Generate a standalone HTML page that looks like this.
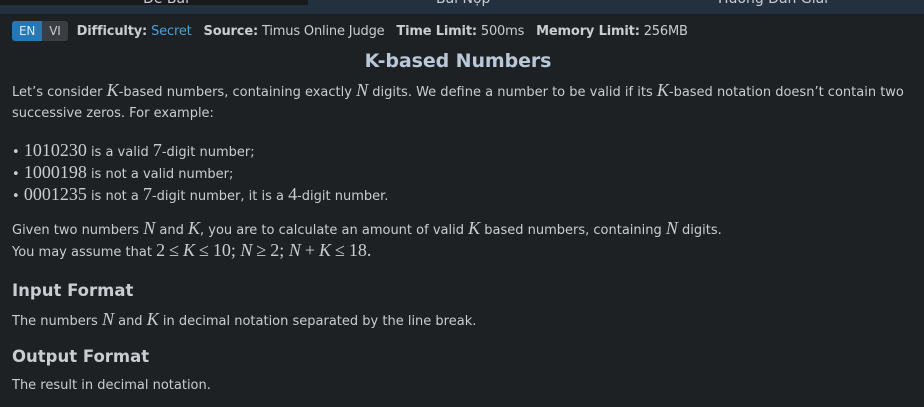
<!DOCTYPE html>
<html><head><meta charset="utf-8"><style>
body{margin:0;background:#1e2124;color:#c9cdd1;font-family:"DejaVu Sans","Liberation Sans",sans-serif;font-size:13px;width:924px;height:407px;overflow:hidden;position:relative}
.tabs{position:absolute;top:0;left:0;width:924px;height:14px;background:#22303f;overflow:hidden}
.tabs div{position:absolute;top:-9px;font-size:14px;color:#c9cdd1}
.t1{left:0;width:308px;height:14px;background:#17191b;position:absolute}
.meta{position:absolute;top:21px;left:12px;display:flex;align-items:center;font-size:13px;letter-spacing:-0.17px}
.lang{display:flex;border-radius:3px;overflow:hidden;margin-right:9px}
.lang span{display:inline-block;height:20px;line-height:20px;padding:0 7px;font-size:12px}
.en{background:#2478b5;color:#dfe8f0}.vi{background:#3a3e43;color:#c9cdd1}
b{font-weight:bold;color:#c9cdd1}
.blue{color:#4a9fd8}
h1{position:absolute;top:50px;left:0;width:916px;text-align:center;margin:0;font-size:19px;color:#b9c8d8;font-weight:bold;letter-spacing:-0.1px}
.p{position:absolute;left:12px;line-height:21px;letter-spacing:0}
i.m{font-family:"Liberation Serif",serif;font-size:18px;font-style:italic;line-height:1}
.n{font-family:"Liberation Serif",serif;font-size:18px;line-height:1}
.o{margin:0 4px}
h2{position:absolute;left:12px;margin:0;font-size:16.5px;color:#c9cdd1;font-weight:bold}
</style></head><body>
<div class="tabs"><div class="t1"></div><div style="left:143px">Đề Bài</div><div style="left:436px">Bài Nộp</div><div style="left:718px">Hướng Dẫn Giải</div></div>
<div class="meta"><div class="lang"><span class="en">EN</span><span class="vi">VI</span></div>
<b>Difficulty:</b>&nbsp;<span class="blue">Secret</span>&nbsp;&nbsp;&nbsp;<b>Source:</b>&nbsp;Timus Online Judge&nbsp;&nbsp;&nbsp;<b>Time Limit:</b>&nbsp;500ms&nbsp;&nbsp;&nbsp;<b>Memory Limit:</b>&nbsp;256MB</div>
<h1>K-based Numbers</h1>
<div class="p" style="top:81px">Let’s consider <i class="m">K</i>-based numbers, containing exactly <i class="m">N</i> digits. We define a number to be valid if its <i class="m">K</i>-based notation doesn’t contain two<br>successive zeros. For example:</div>
<div class="p" style="top:141px">• <span class="n">1010230</span> is a valid <span class="n">7</span>-digit number;<br>• <span class="n">1000198</span> is not a valid number;<br>• <span class="n">0001235</span> is not a <span class="n">7</span>-digit number, it is a <span class="n">4</span>-digit number.</div>
<div class="p" style="top:219px">Given two numbers <i class="m">N</i> and <i class="m">K</i>, you are to calculate an amount of valid <i class="m">K</i> based numbers, containing <i class="m">N</i> digits.<br>You may assume that <span class="n">2<span class="o">≤</span><i class="m">K</i><span class="o">≤</span>10; <i class="m">N</i><span class="o">≥</span>2; <i class="m">N</i><span class="o">+</span><i class="m">K</i><span class="o">≤</span>18.</span></div>
<h2 style="top:281px">Input Format</h2>
<div class="p" style="top:310px">The numbers <i class="m">N</i> and <i class="m">K</i> in decimal notation separated by the line break.</div>
<h2 style="top:347px">Output Format</h2>
<div class="p" style="top:375px">The result in decimal notation.</div>
</body></html>
